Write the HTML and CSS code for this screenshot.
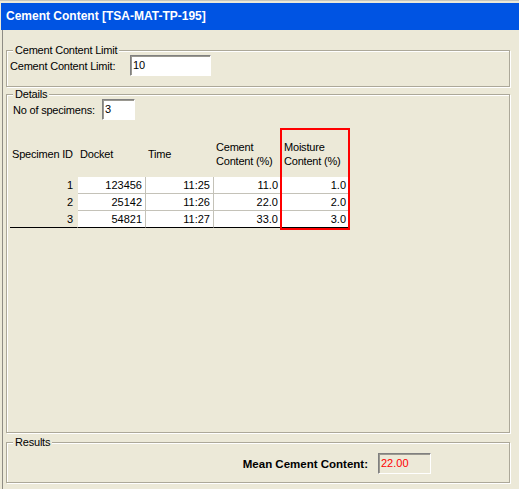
FILE: index.html
```html
<!DOCTYPE html>
<html>
<head>
<meta charset="utf-8">
<link rel="stylesheet" href="styles.css">
</head>
<body>
<div class="window">
  <div class="titlebar">Cement Content [TSA-MAT-TP-195]</div>
  <div class="content">
    <div class="group g-limit">
      <div class="legend">Cement Content Limit</div>
      <div class="field-row row-limit">
        <span class="lbl lbl-limit">Cement Content Limit:</span>
        <div class="input input-limit">10</div>
      </div>
    </div>
    <div class="group g-details">
      <div class="legend">Details</div>
      <div class="field-row row-spec">
        <span class="lbl lbl-spec">No of specimens:</span>
        <div class="input input-spec">3</div>
      </div>
      <div class="grid-wrap">
        <div class="grid">
          <div class="hcell">Specimen ID</div>
          <div class="hcell">Docket</div>
          <div class="hcell">Time</div>
          <div class="hcell">Cement<br>Content (%)</div>
          <div class="hcell">Moisture<br>Content (%)</div>

          <div class="cell id">1</div>
          <div class="cell">123456</div>
          <div class="cell">11:25</div>
          <div class="cell">11.0</div>
          <div class="cell">1.0</div>

          <div class="cell id">2</div>
          <div class="cell">25142</div>
          <div class="cell">11:26</div>
          <div class="cell">22.0</div>
          <div class="cell">2.0</div>

          <div class="cell id last">3</div>
          <div class="cell last">54821</div>
          <div class="cell last">11:27</div>
          <div class="cell last">33.0</div>
          <div class="cell last">3.0</div>
        </div>
        <div class="highlight"></div>
      </div>
    </div>
    <div class="group g-results">
      <div class="legend">Results</div>
      <div class="field-row row-results">
        <span class="lbl lbl-mean">Mean Cement Content:</span>
        <div class="input input-mean">22.00</div>
      </div>
    </div>
  </div>
</div>
</body>
</html>
```
FILE: styles.css
```css
* { box-sizing: border-box; }
html, body {
  margin: 0;
  padding: 0;
  background: #ECE9D8;
}
body {
  width: 519px;
  height: 489px;
  overflow: hidden;
  font-family: "Liberation Sans", Arial, sans-serif;
  font-size: 11px;
  color: #000;
}
.window {
  border-top: 1px solid #C8C6BC;
  padding-top: 2px;
}
.titlebar {
  margin-left: 1px;
  height: 27px;
  line-height: 27px;
  background: #0054E3;
  color: #fff;
  font-weight: bold;
  font-size: 12px;
  padding-left: 5px;
}
.content {
  margin-left: 2px;
  border-left: 1px solid #8E8C84;
  padding: 20px 0 0 3px;
  height: 459px;
}
.group {
  width: 504px;
  border: 1px solid #ACA899;
  box-shadow: inset 1px 1px #fff, 1px 1px #fff;
}
.g-limit { height: 37px; }
.g-details { height: 339px; margin-top: 7px; }
.g-results { height: 41px; margin-top: 9px; }
.legend {
  display: table;
  height: 13px;
  line-height: 13px;
  margin: -7px 0 -6px 6px;
  padding: 0 2px;
  background: #ECE9D8;
  letter-spacing: -0.2px;
}
.field-row {
  display: flex;
  align-items: center;
}
.lbl { letter-spacing: -0.2px; white-space: nowrap; }
.row-limit { padding: 4px 0 0 3px; }
.lbl-limit { width: 120px; }
.row-spec { padding: 4px 0 0 6px; }
.lbl-spec { width: 89px; }
.input {
  height: 21px;
  background: #fff;
  border: 1px solid;
  border-color: #808080 #fff #fff #808080;
  box-shadow: inset 1px 1px #9A9890;
  padding: 2px 0 0 2px;
  line-height: 15px;
}
.input-limit { width: 81px; }
.input-spec { width: 33px; }
.grid-wrap {
  position: relative;
  margin: 11px 0 0 3px;
  width: 340px;
}
.grid {
  display: grid;
  grid-template-columns: 68px 68px 68px 68px 68px;
  grid-template-rows: 46px 17px 17px 17px;
}
.hcell {
  display: flex;
  align-items: center;
  padding-left: 2px;
  line-height: 14px;
  letter-spacing: -0.2px;
}
.cell {
  background: #fff;
  border-right: 1px solid #C4C2B8;
  border-bottom: 1px solid #C4C2B8;
  text-align: right;
  padding-right: 3px;
  line-height: 16px;
}
.cell.id {
  background: transparent;
  border-right-color: transparent;
  border-bottom-color: transparent;
  padding-right: 4px;
}
.cell.last { border-bottom-color: #000; }
.highlight {
  position: absolute;
  left: 270px;
  top: -3px;
  width: 70px;
  height: 102px;
  border: 2px solid #FF0000;
}
.row-results {
  justify-content: flex-end;
  padding: 10px 78px 0 0;
}
.lbl-mean {
  font-weight: bold;
  font-size: 11.5px;
  letter-spacing: 0;
  margin-right: 10px;
}
.input-mean {
  width: 53px;
  background: #ECE9D8;
  color: #FF0000;
}
```
